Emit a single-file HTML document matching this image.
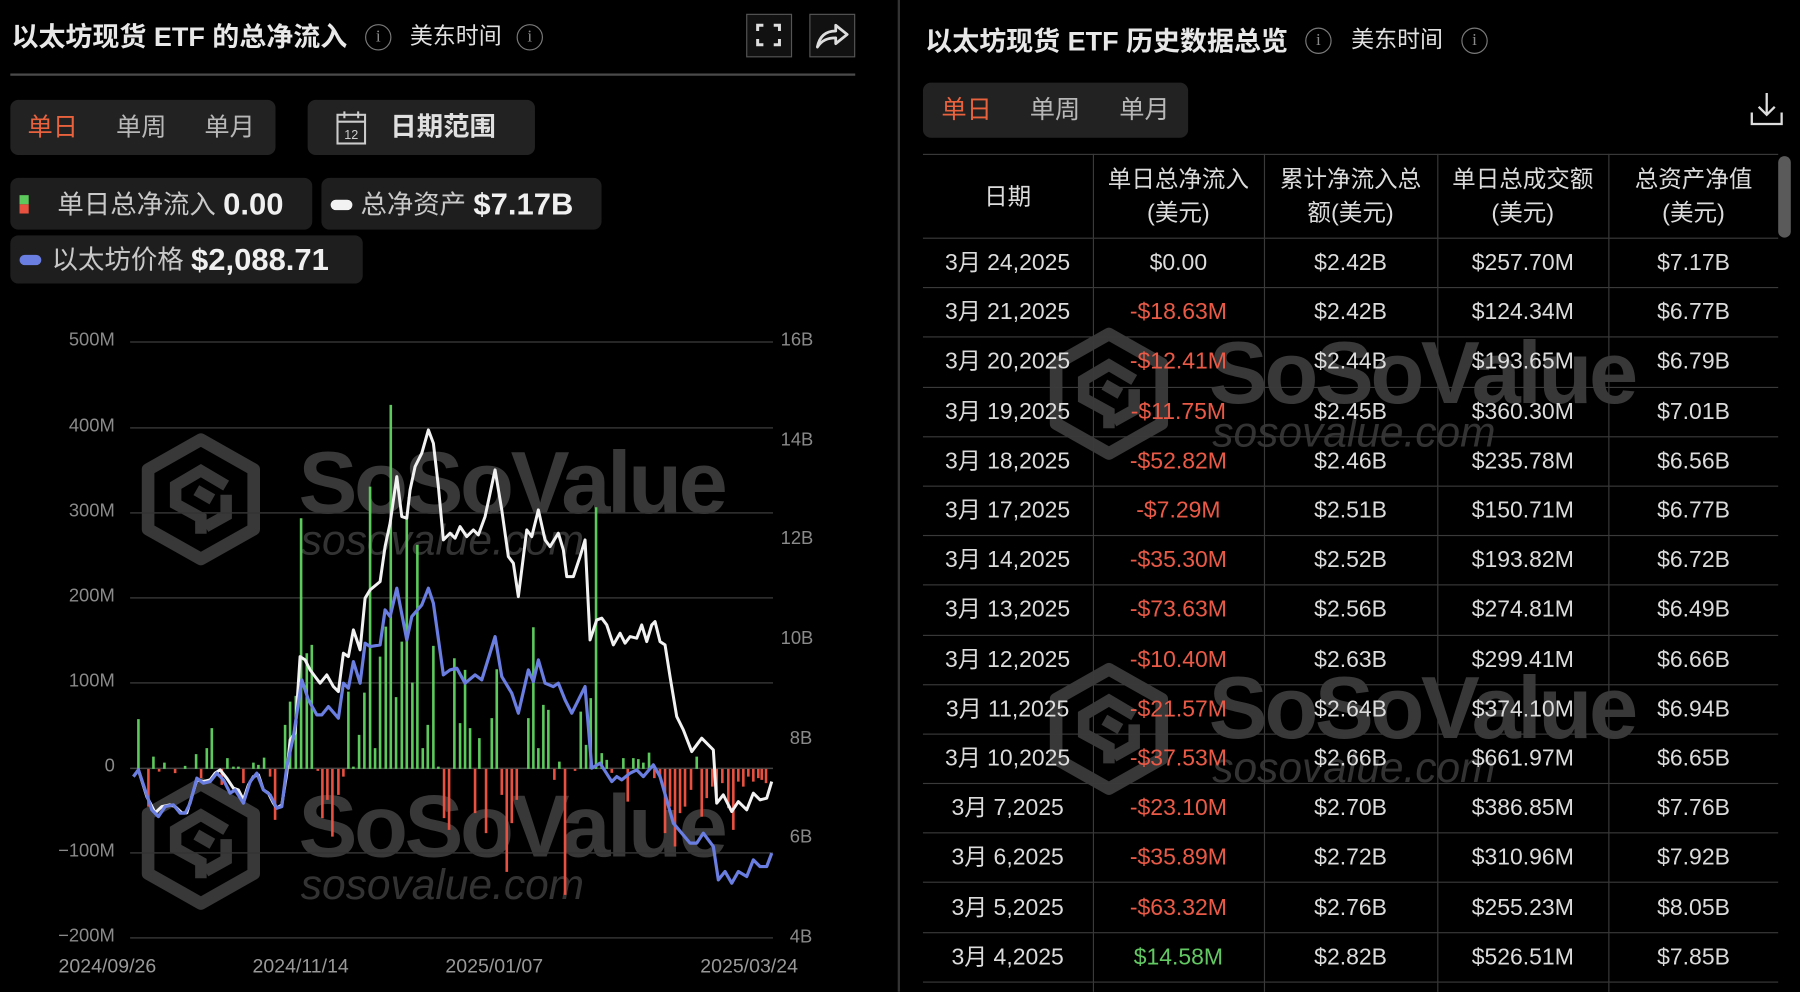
<!DOCTYPE html>
<html><head><meta charset="utf-8">
<style>
html,body{margin:0;padding:0;background:#000;width:1800px;height:992px;overflow:hidden}
#s{position:absolute;left:0;top:0;width:1568px;height:864px;overflow:hidden;transform:scale(1.14796);transform-origin:0 0;font-family:"Liberation Sans","Noto Sans CJK SC",sans-serif;color:#e0e0e0}
.a{position:absolute;white-space:nowrap}
.t{font-size:23.5px;font-weight:bold;color:#e8e8e8;line-height:1}
.info{position:absolute;width:23px;height:23px;border:1.8px solid #7a7a7a;border-radius:50%;box-sizing:border-box;color:#8a8a8a;font-size:15px;line-height:20px;text-align:center;font-family:"Liberation Serif",serif}
.pill{position:absolute;background:#222;border-radius:7px}
.tab{position:absolute;font-size:22px;color:#b8b8b8;line-height:1}
.lg{position:absolute;background:#1e1e1e;border-radius:7px}
.lt{position:absolute;font-size:23px;color:#c8c8c8;line-height:1;white-space:nowrap}
.lt b{color:#f0f0f0;font-size:27px;vertical-align:-1px}
.ax{position:absolute;font-size:16px;color:#8a8a8a}
.wm{position:absolute;font-weight:bold;font-size:77px;letter-spacing:-3px;color:#383838;line-height:1}
.wc{position:absolute;font-style:italic;font-size:37px;color:#333;line-height:1}
table{position:absolute;left:804px;top:134px;border-collapse:collapse;table-layout:fixed;width:745px;font-size:20px;color:#dcdcdc}
td,th{text-align:center;border:1.4px solid #3a3a3a;padding:0;font-weight:normal;line-height:1}
tr td:first-child,tr th:first-child{border-left:none}
tr td:last-child,tr th:last-child{border-right:none}
th{height:72px;line-height:29px;font-size:20.5px}
td{height:42.2px}
.r{color:#ea5a46}.g{color:#62c862}
</style></head><body>
<div id="s">
<svg class="a" style="left:0;top:0" width="1568" height="864">
<defs><g id="lg"><polygon points="0,-52 46,-26 46,26 0,52 -46,26 -46,-26" fill="none" stroke="#383838" stroke-width="11" stroke-linejoin="round"/><path d="M22,-12 L0,-25 L-22,-12 L-22,4 L0,16 L0,30 M22,-4 L22,14 L4,24 M-4,-8 L10,0" fill="none" stroke="#383838" stroke-width="10" stroke-linejoin="miter"/></g></defs>
<use href="#lg" x="175" y="435"/><use href="#lg" x="175" y="735"/>
<use href="#lg" x="966" y="343"/><use href="#lg" x="966" y="635"/>
</svg>
<div class="wm" style="left:260px;top:383px">SoSoValue</div>
<div class="wc" style="left:262px;top:452px">sosovalue.com</div>
<div class="wm" style="left:260px;top:682px">SoSoValue</div>
<div class="wc" style="left:262px;top:752px">sosovalue.com</div>
<div class="wm" style="left:1053px;top:287px">SoSoValue</div>
<div class="wc" style="left:1056px;top:358px">sosovalue.com</div>
<div class="wm" style="left:1053px;top:579px">SoSoValue</div>
<div class="wc" style="left:1056px;top:650px">sosovalue.com</div>

<div class="a t" style="left:10px;top:21px">以太坊现货 ETF 的总净流入</div>
<div class="info" style="left:318px;top:21px">i</div>
<div class="a" style="left:357px;top:22px;font-size:20px;line-height:1;color:#e0e0e0">美东时间</div>
<div class="info" style="left:450px;top:21px">i</div>
<div class="a" style="left:650px;top:12px;width:40px;height:38px;border:1.5px solid #555;box-sizing:border-box;background:#111">
<svg width="37" height="35" viewBox="0 0 37 35"><path d="M9 14V9h5M23 9h5v5M28 21v5h-5M14 26H9v-5" fill="none" stroke="#ddd" stroke-width="2.6"/></svg></div>
<div class="a" style="left:705px;top:12px;width:40px;height:38px;border:1.5px solid #555;box-sizing:border-box;background:#111">
<svg width="37" height="35" viewBox="0 0 37 35"><path d="M6 28C8 18 14 14 22 14V9l10 8-10 8v-5C15 20 10 22 6 28Z" fill="none" stroke="#ddd" stroke-width="2.4" stroke-linejoin="round"/></svg></div>
<div class="a" style="left:9px;top:64px;width:736px;height:2px;background:#4a4a4a"></div>

<div class="pill" style="left:9px;top:87px;width:231px;height:48px"></div>
<div class="tab" style="left:24px;top:100px;color:#e8623e">单日</div>
<div class="tab" style="left:101px;top:100px">单周</div>
<div class="tab" style="left:178px;top:100px">单月</div>
<div class="pill" style="left:268px;top:87px;width:198px;height:48px"></div>
<svg class="a" style="left:291px;top:95px" width="30" height="32" viewBox="0 0 30 32"><rect x="3" y="5" width="24" height="25" fill="none" stroke="#ccc" stroke-width="1.8"/><line x1="3" y1="11" x2="27" y2="11" stroke="#ccc" stroke-width="1.8"/><line x1="9" y1="2" x2="9" y2="8" stroke="#ccc" stroke-width="1.8"/><line x1="21" y1="2" x2="21" y2="8" stroke="#ccc" stroke-width="1.8"/><text x="15" y="26" font-size="11" fill="#ccc" text-anchor="middle" font-family="Liberation Sans">12</text></svg>
<div class="tab" style="left:340px;top:99px;color:#e0e0e0;font-weight:bold;font-size:23px">日期范围</div>

<div class="lg" style="left:9px;top:155px;width:263px;height:45px"></div>
<div class="a" style="left:17px;top:170px;width:8px;height:8px;background:#5cc95c"></div>
<div class="a" style="left:17px;top:178px;width:8px;height:8px;background:#e8503f"></div>
<div class="lt" style="left:50px;top:165px">单日总净流入 <b>0.00</b></div>
<div class="lg" style="left:280px;top:155px;width:244px;height:45px"></div>
<div class="a" style="left:288px;top:174px;width:19px;height:9px;border-radius:5px;background:#f2f2f2"></div>
<div class="lt" style="left:314px;top:165px">总净资产 <b>$7.17B</b></div>
<div class="lg" style="left:9px;top:205px;width:307px;height:42px"></div>
<div class="a" style="left:17px;top:222px;width:19px;height:9px;border-radius:5px;background:#6a7de0"></div>
<div class="lt" style="left:45px;top:213px">以太坊价格 <b>$2,088.71</b></div>

<div class="ax" style="left:20px;width:80px;text-align:right;top:288px">500M</div>
<div class="ax" style="left:20px;width:80px;text-align:right;top:363px">400M</div>
<div class="ax" style="left:20px;width:80px;text-align:right;top:437px">300M</div>
<div class="ax" style="left:20px;width:80px;text-align:right;top:511px">200M</div>
<div class="ax" style="left:20px;width:80px;text-align:right;top:585px">100M</div>
<div class="ax" style="left:20px;width:80px;text-align:right;top:659px">0</div>
<div class="ax" style="left:20px;width:80px;text-align:right;top:733px">−100M</div>
<div class="ax" style="left:20px;width:80px;text-align:right;top:807px">−200M</div>
<div class="ax" style="left:680px;top:288px">16B</div>
<div class="ax" style="left:680px;top:375px">14B</div>
<div class="ax" style="left:680px;top:461px">12B</div>
<div class="ax" style="left:680px;top:548px">10B</div>
<div class="ax" style="left:688px;top:635px">8B</div>
<div class="ax" style="left:688px;top:721px">6B</div>
<div class="ax" style="left:688px;top:808px">4B</div>
<div class="ax" style="left:51px;top:832px;font-size:17px;color:#999">2024/09/26</div>
<div class="ax" style="left:220px;top:832px;font-size:17px;color:#999">2024/11/14</div>
<div class="ax" style="left:388px;top:832px;font-size:17px;color:#999">2025/01/07</div>
<div class="ax" style="left:610px;top:832px;font-size:17px;color:#999">2025/03/24</div>

<svg class="a" style="left:0;top:0" width="1568" height="864" viewBox="0 0 1800 992">
<g stroke="#333" stroke-width="1.5"><path d="M130 342H773M130 428H773M130 513H773M130 598H773M130 683H773M130 853H773M130 938H773"/></g>
<path d="M130 768.5H773" stroke="#444" stroke-width="1.5"/>
<path stroke="#5cc95c" stroke-width="2.6" d="M138.3 769V719.3M153.3 769V756.7M164.3 769V762.7M185 769V766M196 769V754.3M206.7 769V748.3M211.7 769V728.3M227.3 769V758.3M233.3 769V766.7M238.3 769V766.7M253.3 769V762.7M258.3 769V765M264 769V757.7M285 769V725M290 769V701.7M295.7 769V696M301 769V518.3M306.7 769V653.3M311.7 769V645M348.3 769V691.7M353.3 769V766.7M359 769V735M364.3 769V692.7M370 769V486.7M375 769V748.3M380 769V656.7M385.7 769V626.7M390.7 769V405M396 769V697.3M401.7 769V641.7M406.7 769V516.7M412.3 769V682.7M417.3 769V545M422.7 769V748.3M427.7 769V725M433.3 769V646M438.3 769V766.7M454.3 769V658.3M460 769V723.3M465 769V670M470 769V728.3M479.3 769V738.3M491.7 769V718.3M496.7 769V669.3M528.3 769V718.3M533.3 769V627.3M538.3 769V748.3M543.3 769V705M548.3 769V710M559.3 769V761.7M580.7 769V711.7M586 769V745M590.7 769V698.3M596 769V507.3M601.7 769V753.3M606.7 769V760M623.3 769V758.3M633.3 769V758.3M638.3 769V759.3M643.3 769V762.7M649 769V752.7M696.7 769V756.7"/>
<path stroke="#e8503f" stroke-width="2.6" d="M148.3 769V806.7M159 769V771.7M175 769V773.3M201 769V778.3M221.7 769V785M243.3 769V783.3M270 769V776.7M275 769V820M317.7 769V771M322.3 769V818.3M327.3 769V800M332.3 769V836.7M338.3 769V795M343.3 769V776.7M444 769V818.3M449 769V830M475 769V813.3M486 769V833.3M501.7 769V795M506.7 769V872M511.7 769V823.3M516.7 769V800M554.3 769V780M565 769V895M575 769V771M611.7 769V773M627.7 769V801.7M654.3 769V778.3M660 769V778.3M665 769V833.3M670 769V806.7M675 769V846.7M680 769V813.3M685 769V806.7M691 769V790M701.7 769V816.7M706.7 769V798.3M712.3 769V786.7M716.7 769V796.7M722.3 769V783.3M728.3 769V808.3M733.3 769V830M738.3 769V781.7M743.3 769V786.7M748.3 769V776.7M753.3 769V781.7M758.3 769V778.3M761.7 769V780M766 769V783.3"/>
<polyline fill="none" stroke="#f2f2f2" stroke-width="3" stroke-linejoin="round" points="133.3,776.7 138.3,770 146.7,796.7 155,813 161.7,806.7 170,805 175,806.7 181.7,813 186.7,813 191.7,796.7 196.7,780 203.3,781.7 210,780 215,773.3 220,770 226.7,778.3 233.3,788.3 238.3,790 243.3,800 248.3,785 253.3,776.7 258.3,775 263.3,790 268.3,793.3 273.3,803.3 276.7,808.3 281.7,805 286.7,773.3 290,740 295,733.3 300,656.7 305,660 310,670 315,676.7 320,683.3 326.7,675 333.3,686.7 338.3,691.7 343.3,653.3 348.3,656.7 353.3,630 356.7,640 360,650 365,598.3 370,590 380,581.7 385,546.7 390,523.3 396.7,476.7 401.7,516.7 406.7,518.3 410,490 415,466.7 421.7,453.3 428.3,430 433.3,443.3 438.3,486.7 443.3,540 450,533.3 455,538.3 460,526.7 466.7,536.7 473.3,530 478.3,535 485,516.7 495,470 501.7,510 508.3,556.7 513.3,563.3 518.3,596.7 526.7,530 531.7,536.7 538.3,510 545,540 550,546.7 558.3,533.3 563.3,550 566.7,576.7 573.3,576.7 580,556.7 585,540 590,640 596.7,620 601.7,618.3 606.7,625 613.3,645 620,633.3 625,643.3 630,636.7 636.7,638.3 641.7,625 646.7,641.7 651.7,625 655,621.7 660,641.7 665,645 670,676.7 676.7,716.7 683.3,730 691.7,751.7 701.7,738.3 713.3,750 716.7,803.3 723.3,795 731.7,811.7 738.3,801.7 746.7,810 753.3,793.3 760,800 766.7,798.3 771.7,781.7"/>
<polyline fill="none" stroke="#6a7de0" stroke-width="3.2" stroke-linejoin="round" points="133.3,776.7 138.3,770 145,790 151.7,810 158.3,816.7 165,806.7 173.3,805 180,813.3 185,813.3 190,803.3 196.7,778.3 203.3,783.3 210,781.7 216.7,773.3 223.3,780 230,793.3 235,790 243.3,803.3 250,781.7 256.7,773.3 263.3,790 270,795 276.7,808.3 281.7,806.7 286.7,766.7 293.3,736.7 301.7,680 308.3,700 316.7,715 321.7,715 328.3,706.7 338.3,718.3 343.3,683.3 348.3,688.3 353.3,661.7 360,683.3 365,643.3 370,646.7 380,645 385,610 390,616.7 396.7,588.3 406.7,640 411.7,616.7 421.7,605 428.3,588.3 433.3,603.3 443.3,675 450,670 456.7,668.3 465,683.3 475,675 481.7,680 495,636.7 501.7,676.7 511.7,693.3 518.3,713.3 528.3,670 533.3,681.7 538.3,660 545,683.3 553.3,686.7 558.3,683.3 565,700 571.7,713.3 585,686.7 591.7,768.3 600,763.3 611.7,781.7 616.7,776.7 621.7,780 630,773.3 636.7,770 643.3,776.7 653.3,765 660,776.7 673.3,823.3 690,843.3 696.7,843.3 703.3,833.3 713.3,846.7 718.3,880 725,871.7 731.7,883.3 738.3,871.7 746.7,876.7 753.3,860 760,866.7 766.7,866.7 771.7,853.3"/>
</svg>

<div class="a" style="left:782px;top:0;width:1.5px;height:864px;background:#333"></div>

<div class="a t" style="left:806px;top:25px">以太坊现货 ETF 历史数据总览</div>
<div class="info" style="left:1137px;top:24px">i</div>
<div class="a" style="left:1177px;top:25px;font-size:20px;line-height:1">美东时间</div>
<div class="info" style="left:1273px;top:24px">i</div>
<div class="pill" style="left:804px;top:72px;width:231px;height:48px"></div>
<div class="tab" style="left:820px;top:85px;color:#e8623e">单日</div>
<div class="tab" style="left:897px;top:85px">单周</div>
<div class="tab" style="left:975px;top:85px">单月</div>
<svg class="a" style="left:1523px;top:78px" width="32" height="34" viewBox="0 0 32 34"><path d="M16 3V22M9 15l7 7 7-7M3 20v10h26V20" fill="none" stroke="#ddd" stroke-width="2"/></svg>
<div class="a" style="left:1549px;top:136px;width:11px;height:71px;border-radius:6px;background:#5a5a5a"></div>
<table>
<colgroup><col style="width:148px"><col style="width:149px"><col style="width:151px"><col style="width:149px"><col style="width:148px"></colgroup>
<tr><th>日期</th><th>单日总净流入<br>(美元)</th><th>累计净流入总<br>额(美元)</th><th>单日总成交额<br>(美元)</th><th>总资产净值<br>(美元)</th></tr>
<tr><td>3月 24,2025</td><td>$0.00</td><td>$2.42B</td><td>$257.70M</td><td>$7.17B</td></tr>
<tr><td>3月 21,2025</td><td class="r">-$18.63M</td><td>$2.42B</td><td>$124.34M</td><td>$6.77B</td></tr>
<tr><td>3月 20,2025</td><td class="r">-$12.41M</td><td>$2.44B</td><td>$193.65M</td><td>$6.79B</td></tr>
<tr><td>3月 19,2025</td><td class="r">-$11.75M</td><td>$2.45B</td><td>$360.30M</td><td>$7.01B</td></tr>
<tr><td>3月 18,2025</td><td class="r">-$52.82M</td><td>$2.46B</td><td>$235.78M</td><td>$6.56B</td></tr>
<tr><td>3月 17,2025</td><td class="r">-$7.29M</td><td>$2.51B</td><td>$150.71M</td><td>$6.77B</td></tr>
<tr><td>3月 14,2025</td><td class="r">-$35.30M</td><td>$2.52B</td><td>$193.82M</td><td>$6.72B</td></tr>
<tr><td>3月 13,2025</td><td class="r">-$73.63M</td><td>$2.56B</td><td>$274.81M</td><td>$6.49B</td></tr>
<tr><td>3月 12,2025</td><td class="r">-$10.40M</td><td>$2.63B</td><td>$299.41M</td><td>$6.66B</td></tr>
<tr><td>3月 11,2025</td><td class="r">-$21.57M</td><td>$2.64B</td><td>$374.10M</td><td>$6.94B</td></tr>
<tr><td>3月 10,2025</td><td class="r">-$37.53M</td><td>$2.66B</td><td>$661.97M</td><td>$6.65B</td></tr>
<tr><td>3月 7,2025</td><td class="r">-$23.10M</td><td>$2.70B</td><td>$386.85M</td><td>$7.76B</td></tr>
<tr><td>3月 6,2025</td><td class="r">-$35.89M</td><td>$2.72B</td><td>$310.96M</td><td>$7.92B</td></tr>
<tr><td>3月 5,2025</td><td class="r">-$63.32M</td><td>$2.76B</td><td>$255.23M</td><td>$8.05B</td></tr>
<tr><td>3月 4,2025</td><td class="g">$14.58M</td><td>$2.82B</td><td>$526.51M</td><td>$7.85B</td></tr>
<tr><td></td><td></td><td></td><td></td><td></td></tr>
</table>
</div>
</body></html>
